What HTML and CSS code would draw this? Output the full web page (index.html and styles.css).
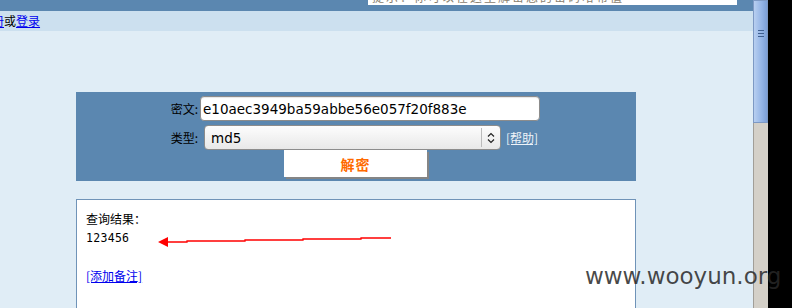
FILE: index.html
```html
<!DOCTYPE html>
<html>
<head>
<meta charset="utf-8">
<link rel="stylesheet" href="styles.css">
</head>
<body>
<div class="screen">
  <div class="page">
    <div class="topbar">
      <div class="topbox"><span>提示：你可以在这里解密您的密码哈希值</span></div>
    </div>
    <div class="navbar"><a href="#">注册</a>或<a href="#">登录</a></div>
    <div class="main">
      <form class="panel">
        <div class="row">
          <label class="lbl">密文:</label>
          <input class="cipher" type="text" value="e10aec3949ba59abbe56e057f20f883e">
        </div>
        <div class="row row2">
          <label class="lbl">类型:</label>
          <div class="select"><span>md5</span><span class="arrows"><svg width="8" height="12" viewBox="0 0 8 12"><path d="M1 4.5 L4 1.5 L7 4.5 M1 7.5 L4 10.5 L7 7.5" fill="none" stroke="#222" stroke-width="1.2"/></svg></span></div>
          <a class="help" href="#">[帮助]</a>
        </div>
        <div class="btnrow"><button type="button" class="btn">解密</button></div>
      </form>
      <div class="result">
        <div class="rtitle">查询结果：</div>
        <div class="rvalue">123456</div>
        <a class="note" href="#">[添加备注]</a>
      </div>
    </div>
  </div>
  <div class="scrollbar">
    <div class="thumb"><span class="grip"></span><span class="grip"></span><span class="grip"></span></div>
    <div class="track"></div>
  </div>
  <div class="black"></div>
  <svg class="arrow" width="240" height="14" viewBox="0 0 240 14">
    <polygon points="0,6 10,1 10,11" fill="#f00"/>
    <polyline points="9,6 29,6 29,5 87,5 87,4 145,4 145,3 203,3 203,2 233,2" fill="none" stroke="#f00" stroke-width="1.3"/>
  </svg>
  <div class="watermark">www.wooyun.org</div>
</div>
</body>
</html>
```
FILE: styles.css
```css
html, body { margin: 0; padding: 0; }
body { background: #000; font-family: "DejaVu Sans", "Noto Sans CJK SC", sans-serif; overflow: hidden; }
.screen { position: relative; display: flex; width: 792px; height: 308px; overflow: hidden; }
.page { width: 753px; height: 308px; background: #e0edf6; display: flex; flex-direction: column; overflow: hidden; }
.topbar { height: 11px; background: #5b87b0; flex: none; }
.topbox { margin-left: 368px; width: 369px; height: 5px; background: #fff; overflow: hidden; }
.topbox span { display: block; margin-top: -9px; margin-left: 4px; font-size: 12px; line-height: 12px; color: #8a8170; font-family: "Noto Sans CJK SC", sans-serif; letter-spacing: 2px; white-space: nowrap; }
.navbar { height: 20px; background: #cce0ef; flex: none; font-family: "Noto Sans CJK SC", sans-serif; font-size: 12px; line-height: 20px; color: #000; margin-left: -20px; white-space: nowrap; }
.navbar a { color: #0000ee; text-decoration: underline; }
.main { padding: 61px 0 0 76px; flex: 1; }
.panel { margin: 0; width: 560px; height: 89px; background: #5b87b0; box-sizing: border-box; padding-top: 4px; }
.row { display: flex; align-items: center; height: 25px; }
.row2 { margin-top: 4px; }
.lbl { width: 122px; text-align: right; font-family: "Noto Sans CJK SC", sans-serif; font-size: 12px; color: #000; }
.cipher { margin-left: 2px; width: 340px; height: 25px; box-sizing: border-box; border: 1px solid #8c8c8c; border-radius: 4px; padding: 0 2px; font-family: "DejaVu Sans", sans-serif; font-size: 13.5px; color: #000; background: #fff; outline: none; box-shadow: inset 0 1px 1px rgba(0,0,0,0.1); }
.select { margin-left: 6px; width: 297px; height: 25px; box-sizing: border-box; border: 1px solid #8c8c8c; border-radius: 4px; background: linear-gradient(#fdfdfd, #e8e8e8); display: flex; align-items: center; font-family: "DejaVu Sans", sans-serif; font-size: 13.5px; color: #000; padding-left: 6px; }
.select span:first-child { flex: 1; }
.arrows { width: 18px; height: 19px; border-left: 1px solid #bbb; display: flex; align-items: center; justify-content: center; }
.help { margin-left: 5px; font-family: "Noto Sans CJK SC", sans-serif; font-size: 12px; color: #eef3f8; text-decoration: underline; }
.btnrow { padding-left: 208px; }
.btn { display: block; width: 143px; height: 27px; margin: 0; padding: 0; border: none; background: #fff; box-shadow: 2px 2px 0 #858585; font-family: "Noto Sans CJK SC", sans-serif; font-weight: bold; font-size: 14px; color: #ff6a00; letter-spacing: 1px; }
.result { margin-top: 18px; width: 560px; height: 120px; box-sizing: border-box; background: #fff; border: 1px solid #6f93b8; padding: 11px 0 0 9px; }
.rtitle { font-family: "Noto Sans CJK SC", sans-serif; font-size: 12px; line-height: 16px; color: #000; }
.rvalue { font-family: "DejaVu Sans Mono", monospace; font-size: 11.5px; line-height: 16px; color: #000; margin-top: 3px; letter-spacing: 0.3px; }
.note { display: inline-block; margin-top: 21px; font-family: "Noto Sans CJK SC", sans-serif; font-size: 12px; color: #0000ee; text-decoration: underline; }
.scrollbar { width: 15px; height: 308px; display: flex; flex-direction: column; flex: none; }
.thumb { height: 123px; box-sizing: border-box; border: 1px solid #7d99c4; background: linear-gradient(90deg, #b8cff0, #93b4e6 60%, #7c9fd6); display: flex; flex-direction: column; align-items: center; padding-top: 29px; gap: 2px; }
.grip { display: block; width: 6px; height: 1px; background: #3f5f8f; }
.track { flex: 1; background: #d4d0c8; border-left: 1px solid #a19e98; }
.black { flex: 1; background: #000; }
.arrow { position: absolute; left: 158px; top: 236px; }
.watermark { position: absolute; left: 585px; top: 261px; font-family: "DejaVu Sans", sans-serif; font-size: 23px; line-height: 30px; color: rgba(40,40,40,0.85); white-space: nowrap; }
```
